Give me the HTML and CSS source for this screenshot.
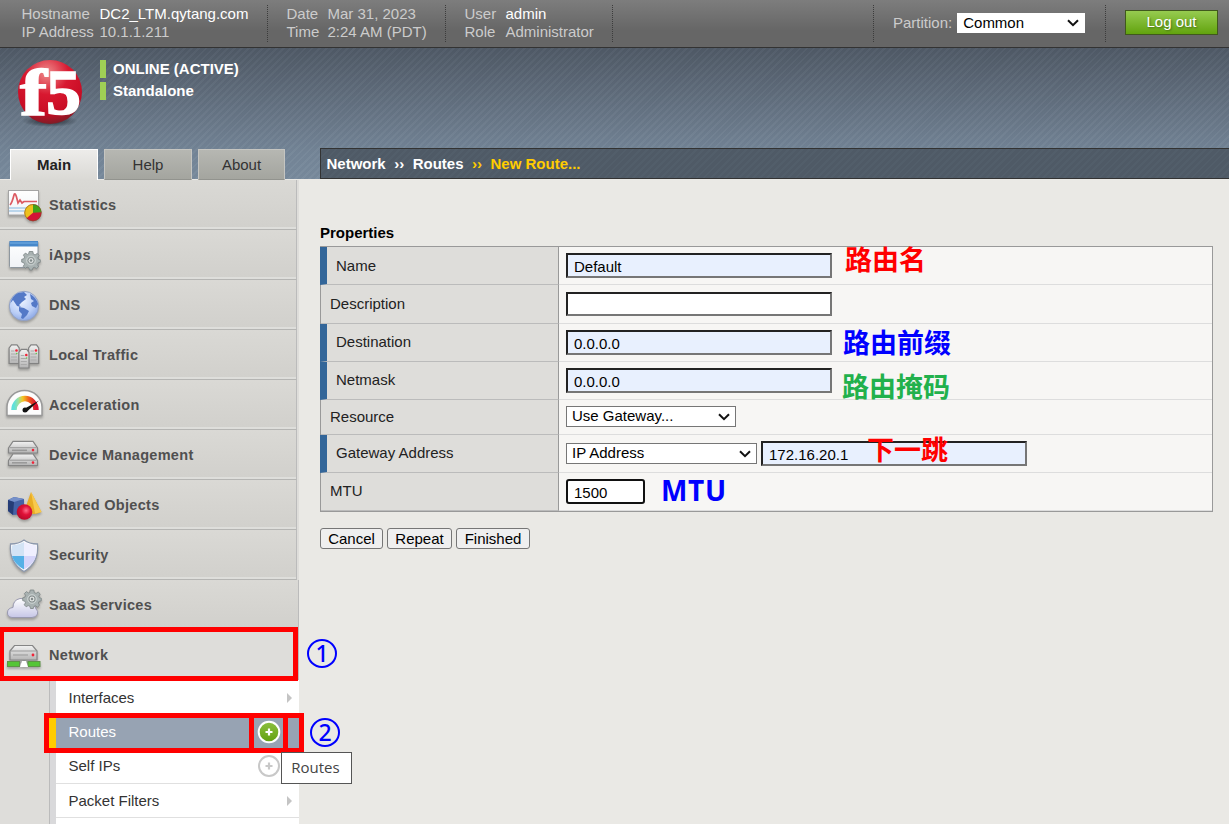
FILE: index.html
```html
<!DOCTYPE html>
<html lang="en">
<head>
<meta charset="utf-8">
<title>BIG-IP - New Route</title>
<link rel="stylesheet" href="styles.css">
</head>
<body>
<svg class="defs" width="0" height="0" aria-hidden="true">
  <defs>
    <linearGradient id="metal" x1="0" y1="0" x2="0" y2="1"><stop offset="0" stop-color="#f2f2f2"/><stop offset="1" stop-color="#b4b4b4"/></linearGradient>
    <linearGradient id="paper" x1="0" y1="0" x2="0" y2="1"><stop offset="0" stop-color="#fff"/><stop offset="1" stop-color="#f0f2f6"/></linearGradient>
    <linearGradient id="cloud" x1="0" y1="0" x2="0" y2="1"><stop offset="0" stop-color="#fff"/><stop offset="1" stop-color="#c6c6e6"/></linearGradient>
    <linearGradient id="dial" x1="0" y1="0" x2="1" y2="0"><stop offset="0" stop-color="#5fe0dc"/><stop offset=".2" stop-color="#9de0a0"/><stop offset=".4" stop-color="#f3c722"/><stop offset=".65" stop-color="#f0641e"/><stop offset="1" stop-color="#d81030"/></linearGradient>
    <radialGradient id="globe" cx=".4" cy=".3" r=".8"><stop offset="0" stop-color="#f0f5ff"/><stop offset=".6" stop-color="#b9cdf6"/><stop offset="1" stop-color="#7c9be0"/></radialGradient>
    <radialGradient id="ball" cx=".6" cy=".4" r=".7"><stop offset="0" stop-color="#ff6e8a"/><stop offset=".4" stop-color="#e01238"/><stop offset="1" stop-color="#b00828"/></radialGradient>
    <radialGradient id="logo" cx=".45" cy=".2" r=".85"><stop offset="0" stop-color="#ee8c8c"/><stop offset=".4" stop-color="#d81830"/><stop offset=".75" stop-color="#c80c24"/><stop offset="1" stop-color="#6a2228"/></radialGradient>
    <radialGradient id="logoshade"><stop offset="0" stop-color="#20262e"/><stop offset="1" stop-color="#20262e" stop-opacity="0"/></radialGradient>
    <linearGradient id="plus" x1="0" y1="0" x2="0" y2="1"><stop offset="0" stop-color="#8cc040"/><stop offset="1" stop-color="#62a010"/></linearGradient>
    <g id="gear">
      <g fill="#a9b2b2" stroke="#7b8484" stroke-width=".8">
        <path d="M-1.800-9h3.600l.5 2.600 1.800.8L6.300-7.100 8.200-4.800 6.800-2.800 7.300-1.300 9.300-.8V1.800L7 2.400 6.300 4.100 7.600 6.200 5.500 8.100 3.500 6.800 1.900 7.400 1.300 9.500H-1.500L-2.100 7.300-3.800 6.600-5.800 7.800-7.800 5.800-6.500 3.800-7.200 2.200-9.300 1.600V-1.200L-7.100-1.800-6.400-3.500-7.600-5.400-5.600-7.400-3.600-6.100-2.300-6.600Z"/>
        <circle r="3" fill="#dde0df"/>
      </g>
      <circle r="4.400" fill="none" stroke="#d3d9d8" stroke-width=".8"/><circle r="1.200" fill="#7f8989"/>
    </g>
    <g id="rack"><path d="M.5 7.500L5 .8H25L29.500 7.500V12.500H.5Z" fill="url(#metal)" stroke="#858585" stroke-width="1.200"/><path d="M1.500 7.200H28.500" stroke="#999"/><path d="M4 9.800H19" stroke="#989898" stroke-width="1.500"/><circle cx="25" cy="9.600" r="1.300" fill="#f02438"/></g>
    <g id="tower"><path d="M.6 4L3 .8H8.500L10.700 4V19.500H.6Z" fill="url(#metal)" stroke="#828282" stroke-width="1.200"/><path d="M2.500 7H6M2.500 10H8.500M2.500 13H8.500M2.500 16H8.500" stroke="#aaa"/><circle cx="8" cy="6.500" r="1.300" fill="#f02438"/><circle cx="8.300" cy="9.500" r=".8" fill="#67c94a"/></g>
  </defs>
</svg>

<header class="topbar">
  <dl class="info info-host"><dt>Hostname</dt><dd class="strong">DC2_LTM.qytang.com</dd><dt>IP Address</dt><dd>10.1.1.211</dd></dl>
  <dl class="info info-date"><dt>Date</dt><dd>Mar 31, 2023</dd><dt>Time</dt><dd>2:24 AM (PDT)</dd></dl>
  <dl class="info info-user"><dt>User</dt><dd class="strong">admin</dd><dt>Role</dt><dd>Administrator</dd></dl>
  <div class="partition"><label for="partition">Partition:</label><select class="select" id="partition"><option>Common</option></select></div>
  <div class="logout"><button class="logout-btn">Log out</button></div>
</header>

<div class="banner">
  <div class="brand">
    <div class="identity">
      <svg class="logo" width="72" height="76" viewBox="0 0 72 76">
        <ellipse cx="36" cy="62" rx="28" ry="6" fill="url(#logoshade)"/>
        <circle cx="36" cy="33" r="32" fill="url(#logo)"/>
        <text class="logo-f" x="6" y="56" textLength="27" lengthAdjust="spacingAndGlyphs">f</text>
        <text class="logo-5" x="32" y="55" textLength="35" lengthAdjust="spacingAndGlyphs">5</text>
      </svg>
      <div class="states"><div class="state">ONLINE (ACTIVE)</div><div class="state">Standalone</div></div>
    </div>
    <nav class="tabs"><a class="tab tab-on">Main</a><a class="tab">Help</a><a class="tab tab-about">About</a></nav>
  </div>
  <div class="crumbs"><span>Network</span><span>››</span><span>Routes</span><span class="now">››</span><span class="now">New Route...</span></div>
</div>

<div class="body">
  <aside class="side">
    <ul class="menu">
      <li class="item"><svg class="ico" viewBox="0 0 40 40"><rect x="4.500" y="5.500" width="30" height="24.500" fill="url(#paper)" stroke="#a4a4a4"/><path d="M5 23H26M5 26H22" stroke="#a9cbe8" stroke-width="1.500"/><path d="M6 20Q8 18 10 10Q11 7 12.500 12L14 18L16 15L18 18L20 16.500H33" fill="none" stroke="#dc5a62" stroke-width="1.700"/><circle cx="29" cy="27.700" r="8.500" fill="#d31436"/><path d="M29 27.700V19.200A8.500 8.500 0 0 1 37.500 27.200Z" fill="#3fa31a"/><path d="M29 27.700V19.200A8.500 8.500 0 0 0 22.500 33.200Z" fill="#eec01d"/><circle cx="29" cy="27.700" r="8.200" fill="none" stroke="#72551e" stroke-opacity=".5"/></svg>Statistics</li>
      <li class="item"><svg class="ico" viewBox="0 0 40 40"><rect x="5.500" y="6.500" width="28.500" height="26" rx="1" fill="url(#paper)" stroke="#8e979f"/><rect x="5.500" y="6" width="28.500" height="5.500" fill="#4788ca"/><path d="M6 8H33.500" stroke="#77afe4"/><use href="#gear" x="27" y="25.500"/></svg>iApps</li>
      <li class="item"><svg class="ico" viewBox="0 0 40 40"><circle cx="20" cy="21" r="14.700" fill="url(#globe)" stroke="#91a0c2"/><path d="M6.500 18Q8 11 14 8L20 7L23 10L20 12L22 14L18 17L15 20L17 22L13 21L9 15ZM15 22L20 23L25 26L23 30L19 34L17 33L18 29L15 26ZM26 9Q32 12 34 19L32 23L28 21L27 18L30 16L27 14Z" fill="#5479c7"/></svg>DNS</li>
      <li class="item"><svg class="ico" viewBox="0 0 40 40"><use href="#tower" x="4.500" y="9"/><use href="#tower" x="24" y="9"/><use href="#tower" x="14.300" y="13.500"/></svg>Local Traffic</li>
      <li class="item"><svg class="ico" viewBox="0 0 40 40"><path d="M3 30.500V22A17.500 16.500 0 0 1 38 22V30.500Z" fill="#fdfdfd" stroke="#999" stroke-width="1.500" stroke-linejoin="round"/><path d="M10 25A11 11.500 0 0 1 32 25" fill="none" stroke="url(#dial)" stroke-width="5.500"/><path d="M20 24L35 15.500L22.500 27Z" fill="#111"/><circle cx="21" cy="25" r="2.500" fill="#111"/></svg>Acceleration</li>
      <li class="item"><svg class="ico" viewBox="0 0 40 40"><use href="#rack" x="4" y="5.500"/><use href="#rack" x="4" y="18"/></svg>Device Management</li>
      <li class="item"><svg class="ico" viewBox="0 0 40 40"><path d="M4 15L10 12L20 14V29L9 30L4 26Z" fill="#4562a6"/><path d="M4 15L10 12L20 14L10 17Z" fill="#7590c9"/><path d="M4 15L10 17L9 30L4 26Z" fill="#263d77"/><path d="M27 7L37.500 27Q30 31 20 27Z" fill="#e9ad25"/><path d="M27 7L31 28.500L37.500 27Z" fill="#f8c94d"/><circle cx="20.500" cy="27" r="7.800" fill="url(#ball)"/></svg>Shared Objects</li>
      <li class="item"><svg class="ico" viewBox="0 0 40 40"><path d="M20 5Q25 9 33.500 9Q35 28 20 36.500Q5 28 6.500 9Q15 9 20 5Z" fill="#fff" stroke="#8c98ad" stroke-width="1.300"/><path d="M20 7V21H8Q7 16 8 10.500Q15 10 20 7Z" fill="#d3e3f5"/><path d="M20 7V21H32Q33 16 32 10.500Q25 10 20 7Z" fill="#efefff"/><path d="M8 21H20V34.500Q10 29 8 21Z" fill="#55b0e6"/><path d="M32 21H20V34.500Q30 29 32 21Z" fill="#d6d5fa"/></svg>Security</li>
      <li class="item item-wide"><svg class="ico" viewBox="0 0 40 40"><path d="M8 32.500Q3 32 3.500 27Q4 23 9 22.500Q9 15 16 13.500Q23 13 25 20Q31 19 32 24Q34.500 26 33.500 29Q32 32.500 28 32.500Z" fill="url(#cloud)" stroke="#9999b0"/><use href="#gear" x="28" y="14"/></svg>SaaS Services</li>
      <li class="item item-open"><svg class="ico" viewBox="0 0 40 40"><path d="M4 27.500H36M20 25V30" stroke="#999" stroke-width="2"/><rect x="3.500" y="26.500" width="12" height="5" fill="#55c537" stroke="#5d9447"/><rect x="24" y="26.500" width="12" height="5" fill="#55c537" stroke="#5d9447"/><path d="M16 32L18 26H22L24 32Z" fill="#fff"/><path d="M6 16L10.500 10.500H28.500L33 16V25H6Z" fill="url(#metal)" stroke="#858585" stroke-width="1.200"/><path d="M6.500 16H32.500M9 20H24" stroke="#999"/><circle cx="29" cy="20" r="1.400" fill="#f02438"/></svg>Network</li>
    </ul>
    <ul class="sub">
      <li class="row">Interfaces<i class="arrow"></i></li>
      <li class="row row-on">Routes<svg class="add" viewBox="0 0 24 24"><circle cx="12" cy="12" r="10.300" fill="url(#plus)" stroke="#fff" stroke-width="2"/><path d="M12 8.500V15.500M8.500 12H15.500" stroke="#fff" stroke-width="2.200"/></svg></li>
      <li class="row row-self">Self IPs<svg class="add" viewBox="0 0 24 24"><circle cx="12" cy="12" r="10" fill="#fff" stroke="#c8c8c8" stroke-width="2"/><path d="M12 8.500V15.500M8.500 12H15.500" stroke="#c8c8c8" stroke-width="2.200"/></svg></li>
      <li class="row">Packet Filters<i class="arrow"></i></li>
      <li class="row"></li>
    </ul>
  </aside>

  <main class="main">
    <h1 class="title">Properties</h1>
    <div class="props">
      <div class="prop"><div class="label req">Name</div><div class="value"><input class="field filled" value="Default"></div></div>
      <div class="prop prop-desc"><div class="label">Description</div><div class="value"><input class="field field-desc"></div></div>
      <div class="prop prop-up"><div class="label req">Destination</div><div class="value"><input class="field filled" value="0.0.0.0"></div></div>
      <div class="prop prop-up"><div class="label req">Netmask</div><div class="value"><input class="field filled" value="0.0.0.0"></div></div>
      <div class="prop prop-res"><div class="label">Resource</div><div class="value"><select class="select pick pick-res"><option>Use Gateway...</option></select></div></div>
      <div class="prop prop-up"><div class="label req">Gateway Address</div><div class="value"><select class="select pick pick-gw"><option>IP Address</option></select><input class="field filled" value="172.16.20.1"></div></div>
      <div class="prop prop-up prop-mtu"><div class="label">MTU</div><div class="value"><input class="field field-mtu" value="1500"></div></div>
    </div>
    <div class="actions"><button class="btn btn-cancel">Cancel</button><button class="btn btn-repeat">Repeat</button><button class="btn btn-finish">Finished</button></div>
  </main>
</div>

<div class="box box-network"></div>
<div class="box box-routes"></div>
<div class="box box-plus"></div>
<div class="tooltip">Routes</div>
<div class="step step-1">1</div>
<div class="step step-2">2</div>
<div class="note note-name">路由名</div>
<div class="note note-prefix">路由前缀</div>
<div class="note note-mask">路由掩码</div>
<div class="note note-hop">下一跳</div>
<div class="note note-mtu">MTU</div>
</body>
</html>
```

FILE: styles.css
```css
* { box-sizing: border-box; }
html, body { margin: 0; height: 100%; overflow: hidden; }
body {
  position: relative;
  display: flex;
  flex-direction: column;
  background: #eae9e5;
  font: 15px/18px "Liberation Sans", Arial, sans-serif;
  color: #111;
}
ul, dl, dd, h1 { margin: 0; padding: 0; list-style: none; }
input, select, button { font: inherit; color: #000; margin: 0; }
.defs { position: absolute; }

/* status bar */
.topbar {
  flex: none;
  display: flex;
  height: 48px;
  padding-top: 5px;
  background: linear-gradient(#7d7d7d, #666 65%, #666);
  border-bottom: 1px solid #333;
  color: #ccc;
}
.info {
  display: grid;
  align-content: start;
  grid-auto-rows: 18px;
  height: 37px;
  border-right: 1px dotted #3c3c3c;
}
.info-host { width: 268px; padding-left: 21.500px; grid-template-columns: 78px 1fr; }
.info-date { width: 178px; padding-left: 18.500px; grid-template-columns: 41px 1fr; }
.info-user { width: 167px; padding-left: 18.500px; grid-template-columns: 41px 1fr; }
.strong { color: #fff; }
.partition {
  display: flex;
  gap: 5px;
  align-items: center;
  width: 233px;
  height: 37px;
  margin-left: auto;
  padding-left: 19px;
  border: dotted #3c3c3c;
  border-width: 0 1px;
}
.select {
  appearance: none;
  border-radius: 0;
  background: #fff url("data:image/svg+xml,%3Csvg xmlns='http://www.w3.org/2000/svg' width='12' height='8'%3E%3Cpath d='M1 1.200L6 6.200L11 1.200' fill='none' stroke='%23111' stroke-width='2'/%3E%3C/svg%3E") no-repeat right 5px center;
}
.partition .select { width: 128px; height: 20px; padding: 0 5px; border: 1px solid #fff; margin-top: -2px; }
.partition label { margin-top: -2px; }
.logout { width: 123px; padding: 5px 0 0 19px; }
.logout-btn {
  width: 93px;
  height: 25px;
  padding: 0 0 2px;
  border: 1px solid #40581d;
  background: linear-gradient(#96cb50, #62a30e);
  color: #fff;
  text-shadow: 1px 1px 2px #456d16;
}

/* banner */
.banner {
  flex: none;
  display: flex;
  align-items: flex-end;
  height: 131px;
  background:
    repeating-linear-gradient(135deg, rgba(255,255,255,.03) 0 2px, rgba(0,0,0,.015) 2px 5px),
    linear-gradient(#4f5966, #748597 80%, #788a9c);
}
.brand { display: flex; flex-direction: column; width: 320px; height: 132px; align-self: flex-start; }
.identity { display: flex; height: 101px; padding-left: 14px; }
.logo { margin-top: 11px; overflow: visible; }
.logo-f { font: bold 66px "Liberation Serif", serif; fill: #fff; stroke: #fff; stroke-width: 1.500; }
.logo-5 { font: bold 64px "Liberation Serif", serif; fill: #fff; stroke: #fff; stroke-width: 1.500; }
.states { display: flex; flex-direction: column; gap: 4px; padding: 12px 0 0 14px; }
.state { height: 18px; border-left: 6px solid #9fcf55; padding-left: 7px; color: #fff; font-weight: bold; }
.tabs { display: flex; gap: 6px; height: 31px; padding-left: 10px; }
.tab {
  width: 88px;
  height: 31px;
  border: 1px solid #c5c5c1;
  border-bottom-color: #92938e;
  background: linear-gradient(#b6b7b2, #a4a59f);
  color: #333;
  line-height: 30px;
  text-align: center;
}
.tab-on { border-color: #fff; border-bottom: 0; background: linear-gradient(#edecea, #dad9d5); color: #222; font-weight: bold; }
.tab-about { width: 87px; }
.crumbs {
  flex: 1;
  display: flex;
  gap: 8.500px;
  height: 31px;
  padding-left: 5.500px;
  border: 1px solid #333;
  border-right: 0;
  background: repeating-linear-gradient(135deg, #525e6a 0 2px, #4f5a66 2px 5px);
  color: #fff;
  font-weight: bold;
  line-height: 29px;
}
.now { color: #fc0; }

.body { flex: 1; display: flex; min-height: 0; }

/* sidebar */
.side { width: 299px; margin-top: 1px; background: #dedddA; }
.item {
  display: flex;
  align-items: center;
  gap: 5px;
  width: 297px;
  height: 50px;
  padding-left: 4px;
  border-right: 1px solid #bbb;
  border-bottom: 1px solid #b5b5b3;
  background: linear-gradient(#dad9d5, #d1d0cc);
  box-shadow: inset 0 -2px #dededb;
  color: #505050;
  font-size: 14.500px;
  font-weight: bold;
  letter-spacing: .3px;
}
.item-wide { width: 299px; }
.item-open { width: 299px; background: #dedddA; }
.ico { width: 40px; height: 40px; flex: none; filter: drop-shadow(0 2px 1px rgba(0,0,0,.25)); }
.sub { margin-left: 49px; padding-top: 1px; border-left: 1px solid #bbb; background: linear-gradient(90deg, #d9d9db 6px, #fff 6px); }
.row {
  display: flex;
  align-items: center;
  height: 34px;
  margin-left: 6px;
  padding: 0 7px 0 12.500px;
  border-bottom: 1px solid #e0e0e0;
  color: #333;
}
.row-on { height: 35px; margin-left: -1px; border-left: 7px solid #fc0; background: #97a3b3; color: #fff; }
.row-self { padding-bottom: 2px; }
.arrow { margin-left: auto; border: 5px solid transparent; border-left-color: #c4c4c4; border-right: 0; }
.add { width: 24px; height: 24px; margin-left: auto; margin-right: 11px; }

/* form */
.main { margin: 44px 0 0 21px; width: 893px; }
.title { height: 23px; font-size: 15px; line-height: 19px; color: #000; }
.props { border: 1px solid #999; background: #f7f6f4; }
.prop { display: flex; height: 38px; }
.prop-desc { height: 39px; }
.prop-res { height: 35px; }
.label {
  display: flex;
  align-items: center;
  width: 238px;
  padding-left: 9px;
  border-right: 1px solid #999;
  border-bottom: 1px solid #bbb;
  background: #dedddA;
  color: #222;
}
.req { width: 239px; margin-left: -1px; padding-left: 9px; border-left: 7px solid #369; }
.prop-up .label { padding-bottom: 2px; }
.value { flex: 1; display: flex; align-items: center; gap: 4px; padding-left: 7px; border-bottom: 1px solid #ddd; }
.field {
  width: 266px;
  height: 25px;
  padding: 2px 6px 0;
  border: 2px solid;
  border-color: #222 #767676 #767676 #222;
  background: #fff;
}
.filled { background: #e8f0fe; }
.field-desc { height: 24px; }
.field-mtu { width: 79px; border-color: #111; border-radius: 3px; }
.pick { height: 21px; padding: 0 5px 1px; border: 1px solid #767676; }
.prop-res .value { padding-bottom: 1px; }
.pick-res { width: 170px; }
.pick-gw { width: 191px; }
.actions { display: flex; gap: 4px; margin-top: 16px; }
.btn { height: 21px; padding: 0; border: 1px solid #767676; border-radius: 3px; background: #efefef; }
.btn-cancel { width: 63px; }
.btn-repeat { width: 65px; }
.btn-finish { width: 74px; }

/* markup laid over the page */
.box, .tooltip, .step, .note { position: absolute; }
.box { border: 5px solid #f00; }
.box-network { left: 0; top: 627px; width: 298px; height: 54px; border-left-width: 4px; }
.box-routes { left: 44px; top: 713px; width: 260px; height: 40px; }
.box-plus { left: 249px; top: 713px; width: 39px; height: 40px; }
.tooltip {
  left: 281px;
  top: 752px;
  width: 71px;
  height: 32px;
  border: 1px solid #555;
  background: #fff;
  color: #444;
  font: 15px/29px "Open Sans", "Noto Sans", sans-serif;
  text-align: center;
  padding-right: 2px;
}
.step {
  width: 30px;
  height: 29px;
  border: 2.500px solid #00f;
  border-radius: 50%;
  color: #00f;
  font: 500 23px/25px "Noto Sans", sans-serif;
  text-align: center;
}
.step-1 { left: 307px; top: 639px; }
.step-2 { left: 310px; top: 718px; }
.note { font: bold 27px/30px "Noto Sans CJK SC", sans-serif; white-space: nowrap; }
.note-name { left: 845px; top: 244px; color: #f00; }
.note-prefix { left: 843px; top: 327px; color: #00f; }
.note-mask { left: 842px; top: 371px; color: #22b14c; }
.note-hop { left: 867px; top: 434px; color: #f00; }
.note-mtu { left: 661px; top: 475px; color: #00f; font-family: "Open Sans", sans-serif; font-size: 28px; letter-spacing: .7px; }
```
